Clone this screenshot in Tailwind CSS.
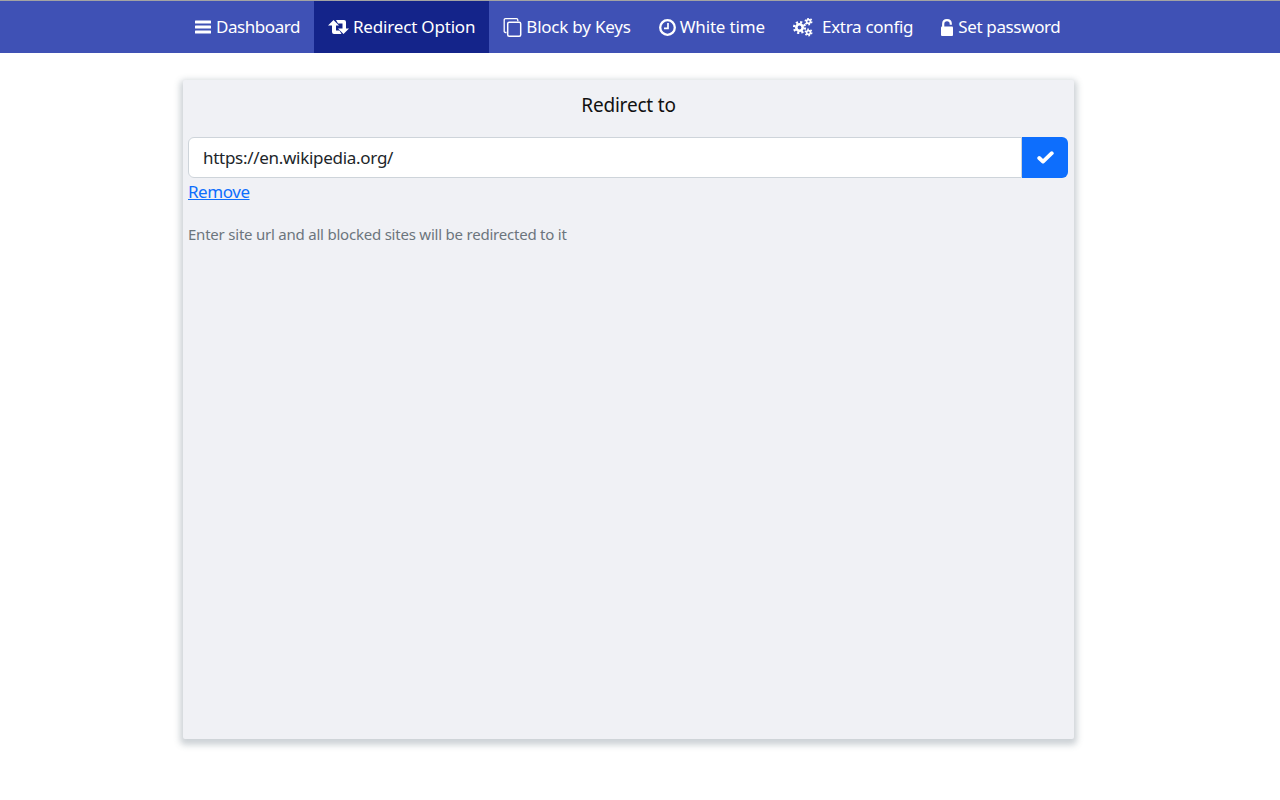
<!DOCTYPE html>
<html lang="en">
<head>
    <meta charset="UTF-8">
    <meta name="viewport" content="width=device-width, initial-scale=1.0">
    <title>Redirect Option</title>
    <script src="https://cdn.jsdelivr.net/npm/@tailwindcss/browser@4"></script>
</head>
<body class="bg-white font-['Noto_Sans',sans-serif] h-[800px] overflow-hidden">
    <!-- Menu -->
    <nav class="h-[53px] bg-[#3f51b5] border-t border-[#a3a3a3] pl-[181px] flex text-white text-[17px]">
        <a href="#" class="flex items-center px-[14px] gap-[4px] tracking-[-0.45px]">
            <svg class="w-[17px] h-[14px]" viewBox="0 0 17 14" fill="currentColor"><rect x="0" y="0.5" width="16" height="3" rx="0.6"/><rect x="0" y="5.5" width="16" height="3" rx="0.6"/><rect x="0" y="10.5" width="16" height="3" rx="0.6"/></svg>
            Dashboard
        </a>
        <a href="#" class="flex items-center px-[14px] gap-[4px] bg-[#14248a] tracking-[-0.18px]">
            <svg class="w-[21px] h-[14px]" viewBox="0 0 21 14" fill="currentColor"><path d="M5.500 0 11 5.500H8V10.500H11.500L13.500 14H6Q4 14 4 12V5.500H0Z"/><path d="M15.500 14 21 8.500H18V2Q18 0 16 0H8L10 3.500H14.500V8.500H10Z"/></svg>
            Redirect Option
        </a>
        <a href="#" class="flex items-center px-[14px] gap-[4px] tracking-[-0.22px]">
            <svg class="w-[19px] h-[19px]" viewBox="0 0 18 19" fill="none" stroke="currentColor"><path stroke-width="1.300" d="M3 14.500H2C1.200 14.500.7 14 .7 13.200V2C.7 1.200 1.200.7 2 .7H13C13.800.7 14.300 1.200 14.300 2V3.200"/><rect x="4.200" y="4.200" width="13" height="14" rx="1.500" stroke-width="1.500"/></svg>
            Block by Keys
        </a>
        <a href="#" class="flex items-center px-[14px] gap-[4px] tracking-[-0.15px]">
            <svg class="w-[17px] h-[17px]" viewBox="0 0 17 17" fill="none" stroke="currentColor"><circle cx="8.500" cy="8.500" r="7.300" stroke-width="2.300"/><path stroke-width="1.700" d="M9 4V9.300H5"/></svg>
            White time
        </a>
        <a href="#" class="flex items-center px-[14px] gap-[9px] tracking-[-0.3px]">
            <svg class="w-[20px] h-[19px]" viewBox="0 0 20 19" fill="none" stroke="currentColor">
                <circle cx="6.500" cy="9.500" r="3.200" stroke-width="2.600"/>
                <circle cx="6.500" cy="9.500" r="5.400" stroke-width="2.400" stroke-dasharray="2.120 2.120"/>
                <circle cx="15.500" cy="3.500" r="1.900" stroke-width="1.600"/>
                <circle cx="15.500" cy="3.500" r="3.200" stroke-width="1.600" stroke-dasharray="1.675 1.675"/>
                <circle cx="15.500" cy="14.500" r="1.900" stroke-width="1.600"/>
                <circle cx="15.500" cy="14.500" r="3.200" stroke-width="1.600" stroke-dasharray="1.675 1.675"/>
            </svg>
            Extra config
        </a>
        <a href="#" class="flex items-center px-[14px] gap-[5px] tracking-[-0.36px]">
            <svg class="w-[12px] h-[17px]" viewBox="0 0 12 17" fill="currentColor"><rect x="0" y="7.500" width="12" height="9.500" rx="1"/><path fill="none" stroke="currentColor" stroke-width="2.200" d="M2.200 8V5C2.200 2.600 3.700 1.100 6 1.100S9.800 2.600 9.800 5V5.800"/></svg>
            Set password
        </a>
    </nav>

    <!-- Redirect card -->
    <div class="ml-[183px] mt-[27px] w-[891px] h-[659px] bg-[#f0f1f5] rounded-[2px] shadow-[0_3px_6px_3px_rgba(90,105,120,0.3)] px-[5px]">
        <h2 class="text-center text-[19px] tracking-[-0.2px] text-[#111] leading-[24px] pt-[13px] pb-[20px]">Redirect to</h2>
        <div class="flex h-[41px] w-[880px]">
            <input type="text" value="https://en.wikipedia.org/" class="flex-1 min-w-0 bg-white border border-[#ced4da] rounded-l-[6px] pl-[14px] text-[17px] tracking-[-0.29px] text-[#212529] outline-none">
            <button class="w-[46px] bg-[#0d6efd] rounded-r-[6px] flex items-center justify-center text-white">
                <svg class="w-[17px] h-[13px]" viewBox="0 0 17 13" fill="none" stroke="currentColor" stroke-width="3.800" stroke-linecap="round" stroke-linejoin="round"><path d="M2.200 7 6 10.600 14.800 2.200"/></svg>
            </button>
        </div>
        <a href="#" class="block w-fit text-[17px] tracking-[-0.45px] leading-[26px] mt-[1px] text-[#0d6efd] underline">Remove</a>
        <p class="mt-[18px] text-[15px] tracking-[-0.22px] leading-[22px] text-[#6c757d]">Enter site url and all blocked sites will be redirected to it</p>
    </div>
</body>
</html>
